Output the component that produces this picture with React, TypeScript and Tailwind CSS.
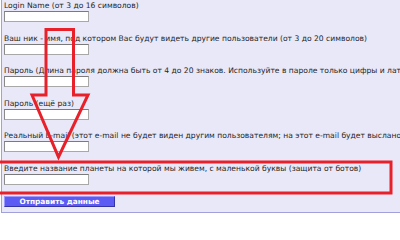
const fields = [
  "Login Name (от 3 до 16 символов)",
  "Ваш ник - имя, под котором Вас будут видеть другие пользователи (от 3 до 20 символов)",
  "Пароль (Длина пароля должна быть от 4 до 20 знаков. Используйте в пароле только цифры и латинские буквы)",
  "Пароль (ещё раз)",
  "Реальный E-mail (этот e-mail не будет виден другим пользователям; на этот e-mail будет выслано письмо для активации)",
  "Введите название планеты на которой мы живем, с маленькой буквы (защита от ботов)",
];

function Field({ label }: { label: string }) {
  return (
    <div className="flex flex-col">
      <div className="h-[10px] leading-[10px] whitespace-nowrap text-[7.6px] text-[#262626]">{label}</div>
      <input
        type="text"
        className="w-[85px] h-[11px] bg-white border border-[#a8a8a8] border-t-[#7a7a7a] border-l-[#8a8a8a] outline-none"
      />
    </div>
  );
}

export default function App() {
  return (
    <div className="relative w-[400px] h-[221px] bg-white overflow-hidden" style={{ fontFamily: '"DejaVu Sans", Verdana, sans-serif' }}>
      <div className="ml-px h-[213px] bg-[#e8e8f8] border-l border-b border-[#a0a0dc] pl-[2px] pt-[1px] flex flex-col gap-[11.5px] overflow-hidden">
        {fields.map((f) => (
          <Field key={f} label={f} />
        ))}
        <button className="w-[111px] h-[11px] bg-[#5c5cf4] border border-[#3434a8] border-t-[#9a9aff] border-l-[#9a9aff] text-white font-bold text-[7.4px] leading-[9px] flex items-center justify-center">
          Отправить данные
        </button>
      </div>

      {/* red annotation drawn over the form */}
      <svg className="absolute inset-0 pointer-events-none" width="400" height="221" viewBox="0 0 400 221">
        <polygon
          points="46,29.5 73.5,29.5 73.5,95 88,95 58.5,157 32,95 46,95"
          fill="none"
          stroke="#e8202a"
          strokeWidth="3"
          strokeLinejoin="miter"
        />
        <rect x="-3" y="162" width="394" height="31" fill="none" stroke="#e8202a" strokeWidth="3" />
      </svg>
    </div>
  );
}
